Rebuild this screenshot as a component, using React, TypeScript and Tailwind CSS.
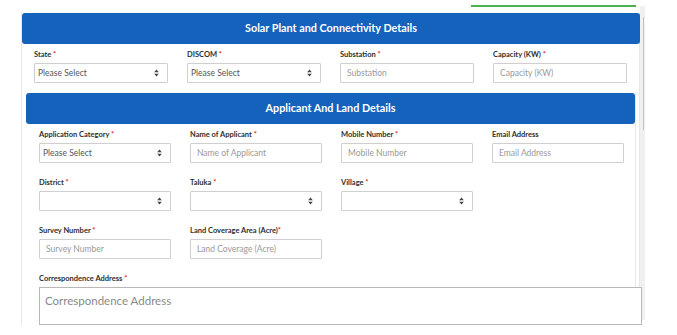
import React from "react";

function Arrows() {
  return (
    <svg width="5" height="8" viewBox="0 0 5 8" className="shrink-0">
      <path d="M2.5 0.5 L4.8 3.3 H0.2 Z" fill="#444" />
      <path d="M2.5 7.5 L4.8 4.7 H0.2 Z" fill="#444" />
    </svg>
  );
}

function Label({ text, required = true, tight = false }: { text: string; required?: boolean; tight?: boolean }) {
  return (
    <div className="h-[9px] leading-[9px] text-[7.5px] font-bold text-[#2e2e2e] whitespace-nowrap mb-[4px]">
      {text}
      {required && <span className="text-[#e02020]">{tight ? "*" : " *"}</span>}
    </div>
  );
}

function Select({ value = "" }: { value?: string }) {
  return (
    <div className="h-[20px] border border-[#cfcfcf] rounded-[1px] bg-white flex items-center justify-between pl-[3px] pr-[8px] text-[8.5px] text-[#555]">
      <span>{value}</span>
      <Arrows />
    </div>
  );
}

function Input({ placeholder }: { placeholder: string }) {
  return (
    <div className="h-[20px] border border-[#cfcfcf] rounded-[1px] bg-white flex items-center pl-[6px] text-[8.5px] text-[#9a9a9a]">
      {placeholder}
    </div>
  );
}

function Field({ label, required = true, tight = false, children }: { label: string; required?: boolean; tight?: boolean; children: React.ReactNode }) {
  return (
    <div className="flex flex-col">
      <Label text={label} required={required} tight={tight} />
      {children}
    </div>
  );
}

export default function App() {
  return (
    <div className="w-[677px] h-[335px] bg-white relative overflow-hidden font-['Lato',sans-serif]">
      {/* scrollbar */}
      <div className="absolute left-[640px] top-[6px] w-[5px] h-[314px] bg-[#f0f0f0]">
        <div className="ml-[3px] mt-[11px] w-[1px] h-[113px] bg-[#c4c4c4]" />
      </div>

      <div className="pt-[5px]">
        <div className="ml-[471px] w-[165px] h-[2px] bg-[#4cae4c]" />

        <div className="ml-[21px] mt-[6px] w-[619px] border-l border-r border-[#e8e8e8]">
          <div className="h-[31px] -mr-[1px] rounded-[3px] bg-[#1562bd] flex items-center justify-center text-white font-bold text-[10.8px]">
            Solar Plant and Connectivity Details
          </div>

          <div className="grid grid-cols-4 gap-x-[19px] pl-[12px] pr-[12px] pt-[6px] pb-[10px]">
            <Field label="State">
              <Select value="Please Select" />
            </Field>
            <Field label="DISCOM">
              <Select value="Please Select" />
            </Field>
            <Field label="Substation">
              <Input placeholder="Substation" />
            </Field>
            <Field label="Capacity (KW)">
              <Input placeholder="Capacity (KW)" />
            </Field>
          </div>

          <div className="ml-[4px] w-[610px] border-r border-[#e8e8e8]">
            <div className="h-[31px] rounded-[3px] bg-[#1562bd] flex items-center justify-center text-white font-bold text-[10.8px]">
              Applicant And Land Details
            </div>

            <div className="pl-[13px] pt-[6px]">
              <div className="grid grid-cols-[132px_132px_132px_132px] gap-x-[19px] gap-y-[15px]">
                <Field label="Application Category">
                  <Select value="Please Select" />
                </Field>
                <Field label="Name of Applicant">
                  <Input placeholder="Name of Applicant" />
                </Field>
                <Field label="Mobile Number">
                  <Input placeholder="Mobile Number" />
                </Field>
                <Field label="Email Address" required={false}>
                  <Input placeholder="Email Address" />
                </Field>

                <Field label="District">
                  <Select />
                </Field>
                <Field label="Taluka">
                  <Select />
                </Field>
                <Field label="Village">
                  <Select />
                </Field>
                <div />

                <Field label="Survey Number">
                  <Input placeholder="Survey Number" />
                </Field>
                <Field label="Land Coverage Area (Acre)" tight>
                  <Input placeholder="Land Coverage (Acre)" />
                </Field>
              </div>

              <div className="mt-[15px] flex flex-col">
                <Label text="Correspondence Address" />
                <div className="relative w-[603px] h-[38px] border border-[#b8b8b8] bg-white pl-[5px] pt-[4px] text-[11.5px] text-[#8a8a8a]">
                  Correspondence Address
                </div>
              </div>
            </div>
          </div>
        </div>
      </div>
    </div>
  );
}
